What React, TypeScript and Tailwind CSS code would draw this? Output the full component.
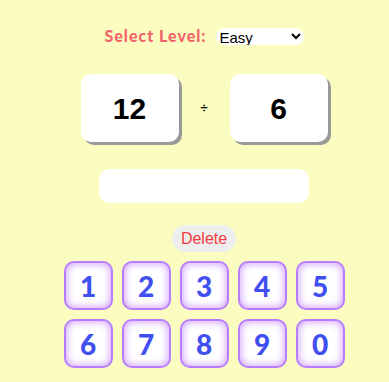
import { useState } from "react"

const keys = ["1", "2", "3", "4", "5", "6", "7", "8", "9", "0"]

export default function App() {
  const [level, setLevel] = useState("Easy")
  const [answer, setAnswer] = useState("")

  return (
    <div className="min-h-[382px] w-full bg-[#fbfdc0] pl-[19px]">
      <div className="flex flex-col items-center pt-[27px]">
        {/* Level picker */}
        <div className="flex h-[18px] items-center gap-[9px]">
          <span className="font-['Comic_Sans_MS','Lato',sans-serif] text-[16px] font-black tracking-[1px] text-[#f2646c]">
            Select Level:
          </span>
          <select
            value={level}
            onChange={(e) => setLevel(e.target.value)}
            className="h-[17px] w-[88px] rounded-full bg-white pl-0 font-['Liberation_Sans',Arial,sans-serif] text-[15px] leading-[17px] text-black outline-none"
          >
            <option>Easy</option>
            <option>Medium</option>
            <option>Hard</option>
          </select>
        </div>

        {/* Question */}
        <div className="mt-[29px] flex items-center font-['Liberation_Sans',Arial,sans-serif]">
          <div className="flex h-[68px] w-[98px] items-center justify-center rounded-[10px] bg-white text-[30px] font-bold text-black shadow-[3px_3px_0_#999]">
            12
          </div>
          <span className="w-[51px] text-center text-[13px] font-bold">÷</span>
          <div className="flex h-[68px] w-[98px] items-center justify-center rounded-[10px] bg-white text-[30px] font-bold text-black shadow-[3px_3px_0_#999]">
            6
          </div>
        </div>

        {/* Answer */}
        <div className="mt-[27px] flex h-[34px] w-[210px] items-center justify-center rounded-[10px] bg-white font-['Liberation_Sans',Arial,sans-serif] text-[22px] font-bold">
          {answer}
        </div>

        {/* Delete */}
        <button
          onClick={() => setAnswer(answer.slice(0, -1))}
          className="mt-[22px] h-[27px] w-[64px] rounded-full bg-[#eeeeee] font-['Liberation_Sans',Arial,sans-serif] text-[16px] text-[#f23c3c]"
        >
          Delete
        </button>

        {/* Keypad */}
        <div className="mt-[9px] grid grid-cols-5 gap-[9px]">
          {keys.map((k) => (
            <button
              key={k}
              onClick={() => setAnswer(answer + k)}
              className="flex h-[49px] w-[49px] items-center justify-center rounded-[10px] border-2 border-[#b87cff] bg-white font-['Comic_Sans_MS','Lato',sans-serif] text-[28px] font-black text-[#3f4ff0] shadow-[inset_0_0_8px_#c58cff]"
            >
              {k}
            </button>
          ))}
        </div>
      </div>
    </div>
  )
}
